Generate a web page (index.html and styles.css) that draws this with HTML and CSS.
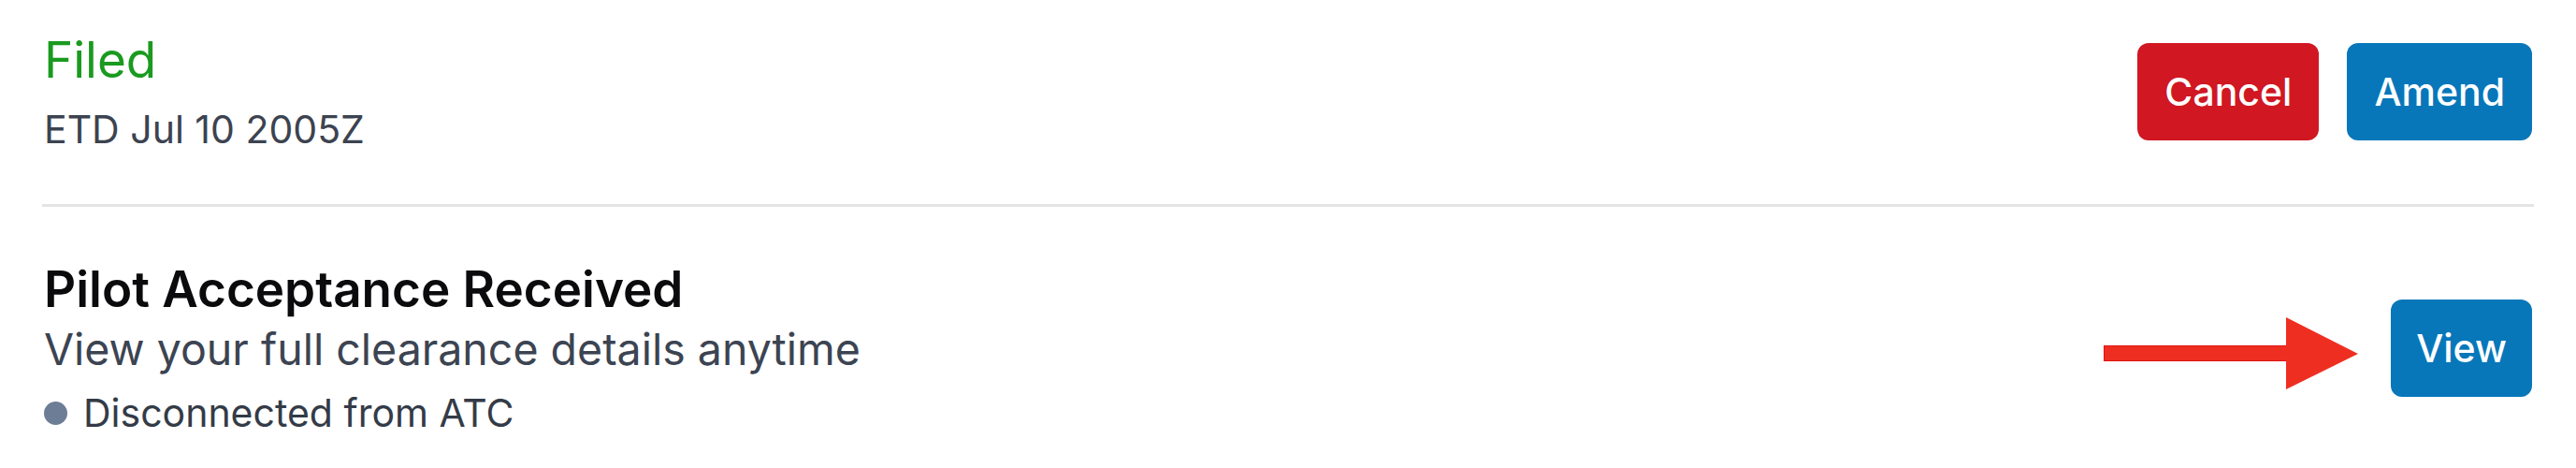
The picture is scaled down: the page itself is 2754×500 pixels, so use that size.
FILE: index.html
```html
<!DOCTYPE html>
<html lang="en">
<head>
<meta charset="utf-8">
<title>Flight plan status</title>
<link rel="stylesheet" href="styles.css">
</head>
<body>
  <main class="panel">
    <section class="row row-filed">
      <div class="info">
        <div class="status">Filed</div>
        <div class="meta">ETD Jul 10 2005Z</div>
      </div>
      <div class="actions">
        <button class="btn btn-danger" type="button">Cancel</button>
        <button class="btn btn-primary" type="button">Amend</button>
      </div>
    </section>

    <hr class="divider">

    <section class="row row-clearance">
      <div class="info">
        <div class="title">Pilot Acceptance Received</div>
        <div class="subtitle">View your full clearance details anytime</div>
        <div class="connection"><span class="dot"></span>Disconnected from ATC</div>
      </div>
      <div class="actions">
        <svg class="pointer" width="272" height="77" viewBox="0 0 272 77" aria-hidden="true">
          <rect x="0.5" y="30.5" width="196" height="16" fill="#ef2e22" stroke="#e01412" stroke-width="1"/>
          <polygon points="195,0 272,39 195,77" fill="#ef2e22"/>
        </svg>
        <button class="btn btn-primary btn-compact" type="button">View</button>
      </div>
    </section>
  </main>
</body>
</html>
```

FILE: styles.css
```css
* {
  box-sizing: border-box;
}

html, body {
  margin: 0;
  padding: 0;
  background: #ffffff;
}

body {
  font-family: Inter, "Noto Sans", "Liberation Sans", sans-serif;
  -webkit-font-smoothing: antialiased;
}

.panel {
  padding: 0 47px;
}

.row {
  display: flex;
  align-items: center;
  justify-content: space-between;
}

.row-filed {
  padding: 33px 0 56px;
}

.row-clearance {
  padding: 57px 0 30px;
}

.divider {
  margin: 0 -2px;
  border: none;
  height: 3px;
  background: #e4e4e4;
}

.info {
  display: flex;
  flex-direction: column;
}

.status {
  font-size: 53px;
  line-height: 62px;
  color: #1a9a1f;
  font-weight: 400;
}

.meta {
  margin-top: 19px;
  font-size: 41px;
  line-height: 48px;
  color: #3c4350;
}

.title {
  font-size: 53px;
  line-height: 62px;
  font-weight: 600;
  color: #0b0b0d;
}

.subtitle {
  margin-top: 6px;
  font-size: 46.5px;
  line-height: 54px;
  color: #3c4452;
}

.connection {
  margin-top: 17px;
  display: flex;
  align-items: center;
  font-size: 41px;
  line-height: 48px;
  color: #343b47;
}

.dot {
  width: 25px;
  height: 25px;
  border-radius: 50%;
  background: #6c7d95;
  margin-right: 17px;
  flex: none;
}

.actions {
  display: flex;
  align-items: center;
  gap: 30px;
}

.btn {
  height: 104px;
  padding: 0 29px;
  border: none;
  border-radius: 12px;
  font-family: inherit;
  font-size: 41px;
  font-weight: 500;
  color: #ffffff;
  cursor: pointer;
}

.btn-compact {
  padding: 0 27px;
}

.btn-danger {
  background: #d01722;
}

.btn-primary {
  background: #0777ba;
}

.pointer {
  display: block;
  flex: none;
  margin-top: 12px;
  margin-right: 5px;
}
```
